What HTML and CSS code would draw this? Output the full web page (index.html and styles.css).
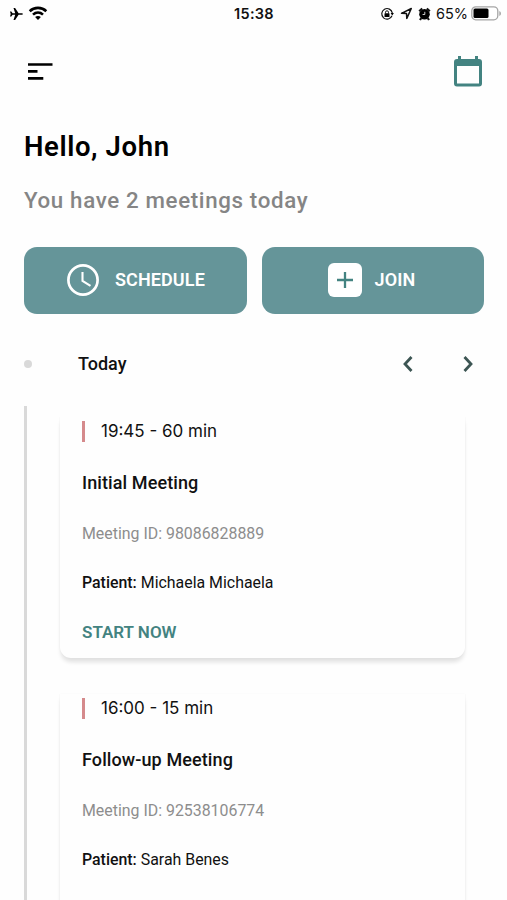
FILE: index.html
```html
<!DOCTYPE html>
<html lang="en">
<head>
  <meta charset="UTF-8" />
  <meta name="viewport" content="width=device-width, initial-scale=1.0"/>
  <title>Meetings</title>
  <link rel="stylesheet" href="styles.css">
</head>
<body>
  <div class="status-bar">
    <div class="status-left">
      <svg width="15" height="14" viewBox="0 0 15 14"><path d="M1 4.500h1.300l1.300 1.700h2.600L4.500 1h1.600l3.500 5.200h3.200c1.500 0 1.500 1.600 0 1.600H9.600L6.100 13H4.500l1.700-5.200H3.600L2.300 9.500H1L1.700 7z"/></svg>
      <svg width="20" height="15" viewBox="0 0 20 15"><path d="M1.700 5.200C6.200.8 13.800.8 18.300 5.200M5 8.600c2.900-2.600 7.100-2.600 10 0" fill="none" stroke="#000" stroke-width="2.600"/><path d="M7.100 11c1.800-1.500 4-1.500 5.800 0L10 14z"/></svg>
    </div>
    <div class="status-time">15:38</div>
    <div class="status-right">
      <svg class="lock" width="14" height="14" viewBox="0 0 14 14"><path d="M12 8.800A5.300 5.300 0 1 1 12.300 6" fill="none" stroke="#111" stroke-width="1.200"/><path d="M10.600 6h3.300l-1.600 2.600z"/><rect x="4.500" y="6.300" width="5" height="3.600" rx=".5"/><path d="M5.500 6.500V5.300a1.500 1.500 0 0 1 3 0v1.200" fill="none" stroke="#111"/></svg>
      <svg class="location" width="13" height="13" viewBox="0 0 13 13"><path d="M1.500 6.300 11.300 1.500 6.800 11.400 6.500 6.500z" fill="none" stroke="#111" stroke-width="1.500" stroke-linejoin="round"/></svg>
      <svg class="alarm" width="13" height="14" viewBox="0 0 13 14"><circle cx="6.500" cy="7.300" r="5.300"/><path d="M1.200 4.200 4.200 1.500M8.800 1.500l3 2.700M3.300 11l-1.300 2M9.700 11l1.300 2" stroke="#111" stroke-width="2.200"/><path d="M6.800 4.800v2.700H4.600" fill="none" stroke="#fff" stroke-width=".8"/></svg>
      <span class="battery-text">65%</span>
      <svg width="31" height="15" viewBox="0 0 31 15"><rect x=".8" y=".8" width="26" height="13" rx="4" fill="#fff" stroke="#a5a5a5" stroke-width="1.300"/><rect x="2.500" y="2.500" width="15" height="9.600" rx="1.500"/><path d="M28.300 5c2.200.8 2.200 4.200 0 5z" fill="#a5a5a5"/></svg>
    </div>
  </div>

  <header class="header">
    <svg class="menu-icon" width="26" height="18" viewBox="0 0 26 18"><path d="M0 1.500h24.500M0 8.400h9.500M0 15.300h15.300" stroke="#000" stroke-width="2.700"/></svg>
    <svg class="calendar-icon" width="28" height="31" viewBox="0 0 28 31"><path fill="#438381" fill-rule="evenodd" d="M4 0h3v3h14V0h3v3h1a3 3 0 0 1 3 3v21.500a3 3 0 0 1-3 3H3a3 3 0 0 1-3-3V6a3 3 0 0 1 3-3h1zM3 10v17.500h22V10z"/></svg>
  </header>

  <main>
    <h1 class="greeting">Hello, John</h1>
    <p class="summary">You have 2 meetings today</p>

    <div class="actions">
      <button class="action-btn schedule">
        <svg width="32" height="32" viewBox="0 0 32 32" fill="none" stroke="#fff"><circle cx="16" cy="16" r="14.600" stroke-width="2.700"/><path d="M15.500 8v9l8 4.800" stroke-width="2.100"/></svg>
        <span>SCHEDULE</span>
      </button>
      <button class="action-btn join">
        <svg width="34" height="34" viewBox="0 0 34 34"><rect width="34" height="34" rx="6" fill="#fff"/><path d="M17 9v16M9 17h16" stroke="#438381" stroke-width="2.300"/></svg>
        <span>JOIN</span>
      </button>
    </div>

    <div class="day-row">
      <span class="dot"></span>
      <h2 class="day">Today</h2>
      <svg class="arrow" width="12" height="18" viewBox="0 0 12 18"><path d="M9.500 2 3 9l6.500 7"/></svg>
      <svg class="arrow" width="12" height="18" viewBox="0 0 12 18"><path d="M2.500 2 9 9l-6.500 7"/></svg>
    </div>

    <div class="timeline">
      <section class="card">
        <div class="time">19:45 - 60 min</div>
        <h3 class="title">Initial Meeting</h3>
        <p class="meeting-id">Meeting ID: 98086828889</p>
        <p class="patient"><b>Patient:</b> Michaela Michaela</p>
        <a class="start">START NOW</a>
      </section>
      <section class="card">
        <div class="time">16:00 - 15 min</div>
        <h3 class="title">Follow-up Meeting</h3>
        <p class="meeting-id">Meeting ID: 92538106774</p>
        <p class="patient"><b>Patient:</b> Sarah Benes</p>
      </section>
    </div>
  </main>
</body>
</html>
```

FILE: styles.css
```css
* {
  margin: 0;
  padding: 0;
  box-sizing: border-box;
}

body {
  font-family: Roboto, sans-serif;
  background: #fefefe;
  color: #111;
  height: 900px;
  overflow: hidden;
}

svg {
  display: block;
  flex: none;
}

.status-bar {
  display: grid;
  grid-template-columns: 1fr auto 1fr;
  align-items: center;
  height: 27px;
  padding: 0 5px 0 9px;
  font-family: Inter, sans-serif;
}

.status-left,
.status-right {
  display: flex;
  align-items: center;
}

.status-left {
  gap: 4px;
}

.status-right {
  justify-content: flex-end;
}

.status-time {
  margin-right: 3px;
  font-size: 14.5px;
  font-weight: 600;
  letter-spacing: 0.3px;
}

.lock {
  margin-right: 6px;
}

.location {
  margin-right: 5px;
}

.alarm {
  margin-right: 5px;
}

.battery-text {
  font-size: 14.5px;
  margin-right: 3px;
}

.header {
  display: flex;
  justify-content: space-between;
  align-items: center;
  height: 89px;
  padding: 0 25px 0 28px;
}

.greeting {
  height: 61px;
  padding-left: 24px;
  line-height: 62px;
  font-size: 27.5px;
  font-weight: 600;
  letter-spacing: 0.6px;
  color: #000;
}

.summary {
  height: 69.5px;
  padding-left: 24px;
  line-height: 46px;
  font-size: 22.3px;
  font-weight: 500;
  letter-spacing: 0.65px;
  color: #858585;
}

.actions {
  display: grid;
  grid-template-columns: 1fr 1fr;
  gap: 15px;
  padding: 0 23px 0 24px;
}

.action-btn {
  display: flex;
  align-items: center;
  height: 67px;
  border: none;
  border-radius: 13px;
  background: #659599;
  color: #fff;
  font-family: inherit;
  font-size: 18px;
  font-weight: 600;
  letter-spacing: 0.1px;
}

.schedule {
  gap: 16px;
  padding-left: 43px;
}

.join {
  gap: 13px;
  padding-left: 66px;
}

.action-btn span {
  margin-bottom: 2px;
}

.day-row {
  display: flex;
  align-items: center;
  height: 92.5px;
  padding: 9px 33px 0 24px;
}

.dot {
  width: 8px;
  height: 8px;
  border-radius: 50%;
  background: #d9d9d9;
}

.day {
  flex: 1;
  margin: 0 0 2px 46px;
  font-size: 18px;
  font-weight: 500;
}

.arrow {
  fill: none;
  stroke: #3c5553;
  stroke-width: 2.8;
}

.arrow + .arrow {
  margin-left: 48px;
}

.timeline {
  display: flex;
  flex-direction: column;
  gap: 36px;
  margin-left: 24px;
  padding: 11px 42px 0 33px;
  border-left: 3px solid #d9d9d9;
}

.card {
  height: 240.5px;
  padding: 4px 22px 0;
  border-radius: 0 0 11px 11px;
  background: #fefefe;
  box-shadow: 0 5px 4px -1px #e0e0e0, 0 0 2px #f0f0f0;
  clip-path: inset(0 -4px -10px -4px);
}

.time {
  height: 21px;
  margin-bottom: 20px;
  padding-left: 16px;
  border-left: 3px solid #d58a8c;
  line-height: 20px;
  font-family: Inter, sans-serif;
  font-size: 17px;
}

.title {
  line-height: 42px;
  font-size: 18px;
  font-weight: 500;
  letter-spacing: 0.1px;
}

.meeting-id,
.patient {
  line-height: 49px;
  font-size: 15.9px;
}

.meeting-id {
  margin-top: 5px;
  color: #8d8d8d;
}

.patient b {
  font-weight: 500;
}

.start {
  display: block;
  line-height: 50px;
  font-size: 17px;
  font-weight: 600;
  color: #438381;
}
```
